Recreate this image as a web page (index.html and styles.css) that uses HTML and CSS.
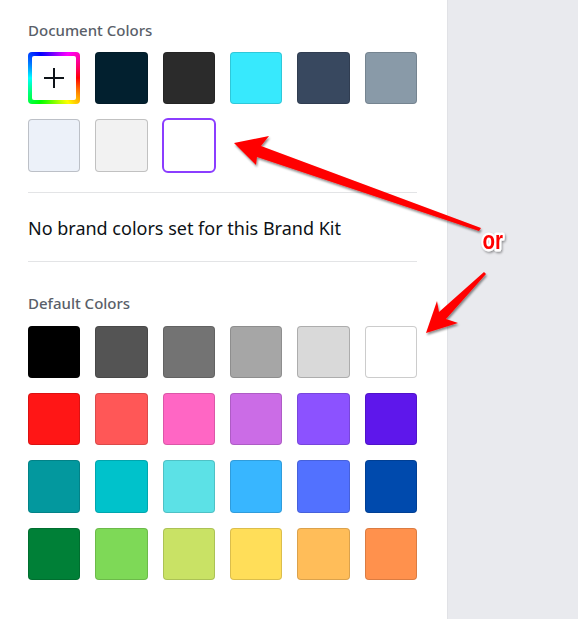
FILE: index.html
```html
<!DOCTYPE html>
<html lang="en">
<head>
<meta charset="utf-8">
<title>Color picker</title>
<link rel="stylesheet" href="styles.css">
</head>
<body>
<div class="page">
  <aside class="panel">
    <h3 class="heading">Document Colors</h3>
    <div class="grid">
      <button class="swatch add" aria-label="Add color"><span class="add-inner"><svg width="22" height="22" viewBox="0 0 22 22"><path d="M11 1v20M1 11h20" stroke="#0e1318" stroke-width="2"/></svg></span></button>
      <button class="swatch" style="background:#02202f"></button>
      <button class="swatch" style="background:#2b2b2b"></button>
      <button class="swatch" style="background:#37e9fd"></button>
      <button class="swatch" style="background:#38485f"></button>
      <button class="swatch" style="background:#899aa8"></button>
      <button class="swatch light" style="background:#ecf1f9"></button>
      <button class="swatch light" style="background:#f2f2f2"></button>
      <button class="swatch selected" style="background:#ffffff"></button>
    </div>
    <hr class="divider">
    <p class="note">No brand colors set for this Brand Kit</p>
    <hr class="divider">
    <h3 class="heading heading-default">Default Colors</h3>
    <div class="grid">
      <button class="swatch" style="background:#000000"></button>
      <button class="swatch" style="background:#545454"></button>
      <button class="swatch" style="background:#737373"></button>
      <button class="swatch" style="background:#a6a6a6"></button>
      <button class="swatch light" style="background:#d9d9d9"></button>
      <button class="swatch light" style="background:#ffffff"></button>
      <button class="swatch" style="background:#ff1616"></button>
      <button class="swatch" style="background:#ff5757"></button>
      <button class="swatch" style="background:#ff66c4"></button>
      <button class="swatch" style="background:#cb6ce6"></button>
      <button class="swatch" style="background:#8c52ff"></button>
      <button class="swatch" style="background:#5e17eb"></button>
      <button class="swatch" style="background:#03989e"></button>
      <button class="swatch" style="background:#00c2cb"></button>
      <button class="swatch" style="background:#5ce1e6"></button>
      <button class="swatch" style="background:#38b6ff"></button>
      <button class="swatch" style="background:#5271ff"></button>
      <button class="swatch" style="background:#004aad"></button>
      <button class="swatch" style="background:#008037"></button>
      <button class="swatch" style="background:#7ed957"></button>
      <button class="swatch" style="background:#c9e265"></button>
      <button class="swatch" style="background:#ffde59"></button>
      <button class="swatch" style="background:#ffbd59"></button>
      <button class="swatch" style="background:#ff914d"></button>
    </div>
  </aside>
  <div class="canvas"></div>
  <svg class="annotations" width="578" height="619" viewBox="0 0 578 619">
    <defs>
      <filter id="shadow" x="-20%" y="-20%" width="140%" height="140%">
        <feDropShadow dx="1" dy="2" stdDeviation="1.2" flood-color="#000" flood-opacity="0.45"/>
      </filter>
      <filter id="tshadow" x="-30%" y="-30%" width="160%" height="160%">
        <feDropShadow dx="1" dy="1.5" stdDeviation="0.8" flood-color="#000" flood-opacity="0.4"/>
      </filter>
    </defs>
    <g fill="#ff0000" filter="url(#shadow)">
      <polygon points="234,143 269,136 261,146 481,228 479,231 257,157 256,165"/>
      <polygon points="426,333 437,301 439,312 484,272 486,274 446,319 458,323"/>
    </g>
    <text class="or" x="482.5" y="248.5" textLength="20.5" lengthAdjust="spacingAndGlyphs" filter="url(#tshadow)">or</text>
  </svg>
</div>
</body>
</html>
```

FILE: styles.css
```css
* { box-sizing: border-box; }

html, body {
  margin: 0;
  padding: 0;
  width: 578px;
  height: 619px;
  overflow: hidden;
  font-family: "Noto Sans", "Open Sans", Arial, sans-serif;
}

.page {
  position: relative;
  display: flex;
  width: 578px;
  height: 619px;
}

.panel {
  width: 447px;
  flex: none;
  background: #ffffff;
  padding: 20px 30px 0 28px;
}

.canvas {
  flex: 1;
  background: #e9eaee;
  border-left: 1px solid #e1e2e6;
}

.heading {
  margin: 0 0 12px;
  font-size: 15px;
  line-height: 20px;
  font-weight: 500;
  color: #5a5f69;
}

.heading-default {
  margin-top: 31px;
  margin-bottom: 13px;
}

.grid {
  display: grid;
  grid-template-columns: repeat(6, 1fr);
  gap: 15px;
}

.swatch {
  display: block;
  padding: 0;
  margin: 0;
  border: none;
  aspect-ratio: 1 / 1;
  border-radius: 4px;
  box-shadow: inset 0 0 0 1px rgba(0, 0, 0, 0.14);
  cursor: pointer;
}

.swatch.light {
  box-shadow: inset 0 0 0 1px rgba(0, 0, 0, 0.2);
}

.swatch.selected {
  border-radius: 5px;
  box-shadow: none;
  outline: 2px solid #8b3dff;
  outline-offset: -1px;
}

.swatch.add {
  position: relative;
  background: conic-gradient(from 90deg, #ff0000, #ffff00, #00ff00, #00ffff, #0000ff, #ff00ff, #ff0000);
  box-shadow: none;
  padding: 4px;
}

.add-inner {
  display: flex;
  align-items: center;
  justify-content: center;
  width: 100%;
  height: 100%;
  background: #ffffff;
  border-radius: 2px;
}

.divider {
  margin: 20px 0 0;
  border: none;
  border-top: 1px solid #e3e4e6;
}

.note {
  margin: 23px 0 21px;
  font-size: 18px;
  line-height: 24px;
  color: #0d1216;
}

.annotations {
  position: absolute;
  left: 0;
  top: 0;
  pointer-events: none;
}

.or {
  font-family: "Liberation Sans", Arial, sans-serif;
  font-weight: 700;
  font-size: 25px;
  fill: #ff0000;
  stroke: #ffffff;
  stroke-width: 5px;
  stroke-linejoin: round;
  paint-order: stroke;
}
```
